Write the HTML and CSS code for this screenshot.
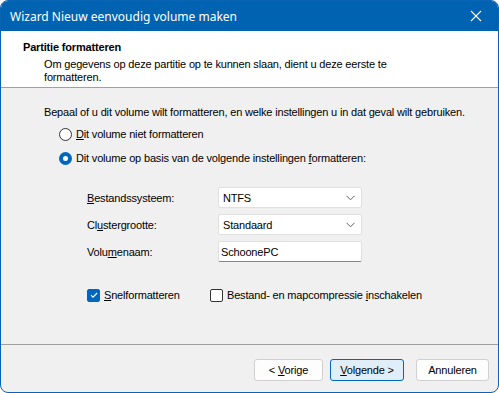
FILE: index.html
```html
<!DOCTYPE html>
<html>
<head>
<meta charset="utf-8">
<link rel="stylesheet" href="styles.css">
</head>
<body>
<div class="window">
  <div class="titlebar">
    <span class="title">Wizard Nieuw eenvoudig volume maken</span>
    <svg class="close" width="12" height="12" viewBox="0 0 12 12"><path d="M1 1L11 11M11 1L1 11" stroke="#fff" stroke-width="1.1" fill="none"/></svg>
  </div>
  <div class="header">
    <div class="h-title">Partitie formatteren</div>
    <div class="h-sub">Om gegevens op deze partitie op te kunnen slaan, dient u deze eerste te formatteren.</div>
  </div>
  <div class="content">
    <div class="intro">Bepaal of u dit volume wilt formatteren, en welke instellingen u in dat geval wilt gebruiken.</div>
    <div class="radios">
      <div class="radio-row"><span class="radio"></span><span><u>D</u>it volume niet formatteren</span></div>
      <div class="radio-row"><span class="radio checked"></span><span>Dit volume op basis van de volgende instellingen <u>f</u>ormatteren:</span></div>
    </div>
    <div class="form">
      <label class="lbl"><u>B</u>estandssysteem:</label>
      <div class="combo"><span>NTFS</span><svg width="9" height="6" viewBox="0 0 9 6"><path d="M0.5 0.8L4.5 4.8L8.5 0.8" stroke="#606060" stroke-width="1" fill="none"/></svg></div>
      <label class="lbl">Cl<u>u</u>stergrootte:</label>
      <div class="combo"><span>Standaard</span><svg width="9" height="6" viewBox="0 0 9 6"><path d="M0.5 0.8L4.5 4.8L8.5 0.8" stroke="#606060" stroke-width="1" fill="none"/></svg></div>
      <label class="lbl">Volu<u>m</u>enaam:</label>
      <div class="textbox">SchoonePC</div>
    </div>
    <div class="checks">
      <div class="check-row"><span class="check checked"><svg width="10" height="10" viewBox="0 0 10 10"><path d="M2 5.2L4 7.2L8.2 3" stroke="#fff" stroke-width="1.1" fill="none"/></svg></span><span><u>S</u>nelformatteren</span></div>
      <div class="check-row"><span class="check"></span><span>Bestand- en mapcompressie <u>i</u>nschakelen</span></div>
    </div>
  </div>
  <div class="footer">
    <button class="btn">&lt; <u>V</u>orige</button>
    <button class="btn primary"><u>V</u>olgende &gt;</button>
    <button class="btn cancel">Annuleren</button>
  </div>
</div>
</body>
</html>
```
FILE: styles.css
```css
html, body {
  margin: 0;
  padding: 0;
  background: #ffffff;
}
.window {
  box-sizing: border-box;
  width: 499px;
  height: 393px;
  border: 1px solid #0a64b4;
  border-radius: 8px;
  overflow: hidden;
  background: #f0f0f0;
  display: flex;
  flex-direction: column;
  font-family: "Liberation Sans", Arial, sans-serif;
  font-size: 11px;
  letter-spacing: -0.17px;
  color: #000;
}
.titlebar {
  height: 30px;
  background: #0063b1;
  display: flex;
  align-items: center;
  justify-content: space-between;
  padding: 0 16px 0 9px;
  flex: none;
}
.title {
  color: #fff;
  font-family: "Noto Sans", sans-serif;
  font-size: 12px;
  letter-spacing: 0;
}
.close { display: block; }
.header {
  height: 57px;
  background: #fff;
  border-bottom: 1px solid #a0a0a0;
  box-sizing: border-box;
  padding: 10px 0 0 22px;
  flex: none;
}
.h-title {
  font-weight: bold;
  line-height: 13px;
}
.h-sub {
  margin: 4px 0 0 21px;
  width: 360px;
  line-height: 13px;
}
.content {
  flex: 1;
  border-bottom: 1px solid #a0a0a0;
  padding: 18px 0 0 43px;
}
.intro { line-height: 13px; }
.radios {
  margin: 3px 0 0 15px;
}
.radio-row {
  display: flex;
  align-items: center;
  height: 24px;
  gap: 4px;
}
.radio {
  box-sizing: border-box;
  width: 13px;
  height: 13px;
  border-radius: 50%;
  border: 1px solid #333;
  background: #fff;
}
.radio.checked {
  border: 4px solid #0067c0;
  background: #fff;
}
.form {
  display: grid;
  grid-template-columns: 131px 144px;
  grid-auto-rows: 21px;
  row-gap: 6px;
  margin: 17px 0 0 43px;
  align-items: center;
}
.combo, .textbox {
  box-sizing: border-box;
  height: 21px;
  background: #fff;
  border: 1px solid #e0e0e0;
  border-radius: 2px;
  display: flex;
  align-items: center;
  justify-content: space-between;
  padding: 0 6px 0 4px;
}
.textbox {
  border-bottom: 1px solid #868686;
  padding-left: 2px;
}
.checks {
  display: flex;
  margin: 25px 0 0 43px;
  gap: 0;
}
.check-row {
  display: flex;
  align-items: center;
  gap: 4px;
  height: 16px;
}
.check-row:first-child { width: 123px; }
.check {
  box-sizing: border-box;
  width: 13px;
  height: 13px;
  border: 1px solid #333;
  border-radius: 2px;
  background: #fff;
  display: flex;
  align-items: center;
  justify-content: center;
}
.check.checked {
  background: #0067c0;
  border-color: #0067c0;
}
.check svg { display: block; }
.footer {
  height: 47px;
  flex: none;
  display: flex;
  align-items: flex-start;
  padding: 14px 0 0 253px;
  box-sizing: border-box;
}
.btn {
  font-family: "Liberation Sans", Arial, sans-serif;
  font-size: 11px;
  letter-spacing: -0.17px;
  width: 69px;
  height: 22px;
  background: #fdfdfd;
  border: 1px solid #d0d0d0;
  border-radius: 3px;
  margin: 0 7px 0 0;
  padding: 0;
  color: #000;
}
.btn.primary {
  width: 74px;
  background: #e0eef9;
  border-color: #0067c0;
  margin-right: 12px;
}
.btn.cancel { width: 73px; }
```
